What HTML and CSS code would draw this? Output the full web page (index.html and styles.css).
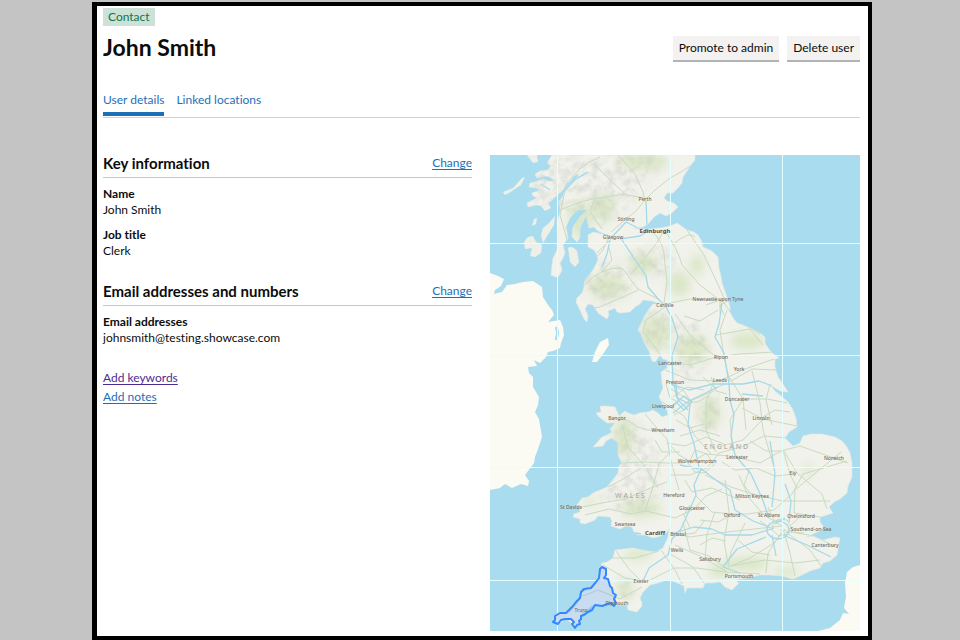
FILE: index.html
```html
<!DOCTYPE html>
<html lang="en">
<head>
<meta charset="utf-8">
<title>John Smith</title>
<link rel="stylesheet" href="styles.css">
</head>
<body>
<main class="page">
  <span class="tag">Contact</span>
  <header class="header">
    <h1 class="title">John Smith</h1>
    <div class="actions">
      <button type="button" class="button">Promote to admin</button>
      <button type="button" class="button">Delete user</button>
    </div>
  </header>
  <nav class="tabs">
    <a class="tab tab-current" href="#details" aria-current="page">User details</a>
    <a class="tab" href="#locations">Linked locations</a>
  </nav>
  <div class="columns">
    <div class="details" id="details">
      <section class="section">
        <div class="section-head"><h2 class="section-title">Key information</h2><a class="link" href="#key">Change</a></div>
        <dl class="list">
          <div class="item"><dt>Name</dt><dd>John Smith</dd></div>
          <div class="item"><dt>Job title</dt><dd>Clerk</dd></div>
        </dl>
      </section>
      <section class="section">
        <div class="section-head"><h2 class="section-title">Email addresses and numbers</h2><a class="link" href="#email">Change</a></div>
        <dl class="list">
          <div class="item"><dt>Email addresses</dt><dd>johnsmith@testing.showcase.com</dd></div>
        </dl>
      </section>
      <div class="extra">
        <a class="link link-visited" href="#keywords">Add keywords</a>
        <a class="link" href="#notes">Add notes</a>
      </div>
    </div>
    <svg class="map" viewBox="490 155 370 476" role="img" aria-label="Map">
      <defs>
        <path id="gb" d="M552 155L547 163 551 166 548 170 540 171 535 174 537 178 545 176 550 177 555 181 548 181 543 179 535 182 530 183 529 187 536 188 541 190 532 193 533 196 537 198 527 203 528 207 536 205 543 206 550 202 555 197 562 191 567 186 570 182 574 176 579 173 576 180 570 186 565 192 562 198 558 202 560 207 560 212 557 223 558 230 558 237 557 250 553 258 552 265 551 275 555 277 559 276 562 270 560 263 563 258 565 253 563 245 568 238 566 227 570 218 575 212 580 209 587 210 580 217 573 227 572 237 577 242 580 237 580 228 586 215 587 219 589 228 594 227 598 231 605 234 593 232 588 235 588 247 594 250 597 255 598 260 593 270 585 280 584 287 582 293 577 298 576 302 580 310 584 319 587 322 588 316 585 309 588 304 593 305 598 313 607 319 609 315 608 311 615 308 617 312 620 313 630 312 635 307 640 304 643 300 652 301 660 304 653 304 649 309 645 315 638 330 641 334 643 340 645 344 649 351 652 361 655 362 660 355 663 359 667 360 667 368 661 372 662 383 663 388 659 397 662 403 667 410 668 415 662 417 658 413 653 410 648 412 640 413 634 415 628 413 625 411 619 416 615 407 607 406 600 406 601 412 596 413 599 417 607 423 615 423 610 429 612 432 607 435 602 437 593 447 603 446 606 441 612 438 618 443 618 455 622 463 619 466 618 473 612 481 607 487 600 490 593 493 588 497 582 498 577 505 580 509 580 512 574 514 573 517 580 519 580 523 585 524 595 520 598 516 610 517 612 521 611 526 620 529 626 526 632 527 634 532 638 535 645 535 653 538 661 536 667 532 672 525 669 530 668 537 663 548 656 552 647 551 633 548 624 549 615 550 613 558 607 562 602 563 600 575 592 587 583 592 578 603 570 612 558 613 554 618 554 622 560 623 567 618 575 628 580 622 582 613 593 605 600 606 607 603 615 605 627 605 628 610 637 612 642 606 642 603 640 598 643 592 650 585 658 583 667 580 675 582 684 586 685 593 687 588 694 588 703 588 705 583 713 583 720 582 725 587 732 590 739 583 735 580 747 578 760 575 770 575 782 576 793 579 802 575 810 571 820 568 823 563 830 561 837 555 840 538 835 537 823 540 813 536 806 537 815 533 822 530 823 526 820 522 820 517 827 515 833 513 829 507 834 502 840 499 847 493 848 486 852 477 852 463 850 453 847 447 842 441 835 437 822 434 811 434 803 436 800 443 796 445 793 446 785 438 789 432 797 427 796 418 792 408 788 402 780 395 775 391 770 385 780 391 788 392 783 384 778 377 775 367 775 359 779 358 772 353 768 348 765 343 765 337 760 333 748 327 737 323 733 318 730 312 730 307 727 297 722 283 721 276 719 268 718 257 712 251 703 247 701 240 698 235 694 232 687 230 677 223 670 226 660 228 650 229 640 229 633 228 643 227 648 224 654 217 660 213 666 216 672 213 678 207 674 203 667 201 664 198 667 193 673 193 678 188 682 183 683 177 687 171 691 165 695 160 695 155Z"/>
        <path id="isles" d="M568 248Q572 245 577 251L579 262 575 267 570 262ZM524 242L528 237 533 236 536 242 542 245 541 253 535 257 530 256 532 248 525 249ZM541 235L543 228 549 223 555 216 554 225 549 233 543 243ZM532 226L534 219 537 218 536 224ZM503 192L513 188 522 178 525 177 521 185 509 193 505 195ZM527 155L537 155 538 162 533 163ZM541 206L548 203 551 208 545 211Z"/>
        <path id="man" d="M608 338L609 345 603 354 597 362 592 362 595 352 600 342Z"/>
        <clipPath id="land"><use href="#gb"/></clipPath>
        <filter id="soft" x="-30%" y="-30%" width="160%" height="160%"><feGaussianBlur stdDeviation="4"/></filter>
        <filter id="relief" x="0" y="0" width="100%" height="100%">
          <feTurbulence type="fractalNoise" baseFrequency=".13" numOctaves="4" seed="8" result="n"/>
          <feColorMatrix in="n" type="matrix" values="0 0 0 0 .55  0 0 0 0 .56  0 0 0 0 .52  2 0 0 0 -.75" result="m"/>
          <feGaussianBlur in="SourceAlpha" stdDeviation="5" result="b"/>
          <feComposite in="m" in2="b" operator="in"/>
        </filter>
      </defs>
      <rect x="490" y="155" width="370" height="476" fill="#aadcef"/>
      <path fill="#fbfaf3" d="M490 273L498 276 504 279 501 286 495 290 494 294 502 292 507 285 515 284 523 282 533 281 542 287 543 297 548 305 552 310 554 315 548 322 560 320 563 327 564 335 561 343 560 348 553 351 548 352 546 357 540 363 534 360 537 366 528 367 529 373 533 377 533 387 539 397 538 405 535 412 539 419 542 437 538 449 535 457 534 463 525 475 529 481 528 486 521 484 512 488 505 484 500 488 490 490ZM860 565L853 567 847 572 845 583 846 597 844 608 849 614 843 613 840 620 830 628 818 631 860 631Z"/>
      <path d="M556 327Q559 332 556 340" fill="none" stroke="#aadcef" stroke-width="3"/>
      <use href="#gb" fill="#f1f2eb" stroke="#e5e9df" stroke-width=".6"/>
      <use href="#isles" fill="#eef0e8"/>
      <use href="#man" fill="#fbfaf3"/>
      <g clip-path="url(#land)">
        <g fill="#d4e3bc" filter="url(#soft)" opacity=".75">
          <ellipse cx="643" cy="162" rx="25" ry="8"/><ellipse cx="603" cy="207" rx="12" ry="14"/><ellipse cx="580" cy="219" rx="11" ry="18"/><ellipse cx="607" cy="286" rx="19" ry="12"/><ellipse cx="643" cy="264" rx="15" ry="10"/><ellipse cx="697" cy="265" rx="7" ry="10"/><ellipse cx="679" cy="284" rx="11" ry="12"/><ellipse cx="656" cy="332" rx="15" ry="17"/><ellipse cx="692" cy="349" rx="16" ry="15"/><ellipse cx="747" cy="341" rx="17" ry="8"/><ellipse cx="710" cy="413" rx="10" ry="16"/><ellipse cx="624" cy="437" rx="10" ry="19"/><ellipse cx="641" cy="508" rx="20" ry="9"/><ellipse cx="638" cy="555" rx="14" ry="5"/><ellipse cx="625" cy="589" rx="8" ry="10"/><ellipse cx="719" cy="571" rx="10" ry="7"/><ellipse cx="746" cy="564" rx="22" ry="7"/><ellipse cx="786" cy="572" rx="14" ry="4"/><ellipse cx="808" cy="470" rx="5" ry="5"/><ellipse cx="590" cy="502" rx="8" ry="3"/>
        </g>
        <g filter="url(#relief)" opacity=".5">
          <path d="M530 155H665L630 205 600 225 580 212 530 208Z"/><ellipse cx="607" cy="282" rx="25" ry="22"/><ellipse cx="653" cy="262" rx="25" ry="15"/><ellipse cx="657" cy="330" rx="17" ry="20"/><ellipse cx="690" cy="350" rx="18" ry="30"/><ellipse cx="709" cy="413" rx="11" ry="20"/><path d="M610 420L640 423 662 460 657 505 625 515 600 500 620 470Z"/><ellipse cx="625" cy="590" rx="8" ry="10"/>
        </g>
        <g fill="none" stroke="#c8dac2" stroke-width="1">
          <path d="M600 157Q575 166 565 190L560 215 568 243M595 165Q610 180 626 195L645 198M618 155L635 174 643 192 645 201M695 163Q678 174 670 178L655 190 645 200M645 200L636 211 626 219 611 232M560 210Q585 199 600 198L625 194M595 196L590 212 602 229M610 235L603 250 593 261M611 239L597 253M665 229L656 244 645 258 630 275M650 230Q665 240 665 265L667 282 664 303M665 231Q678 249 682 265L700 285 722 302M687 230L704 255 714 276 725 300M672 245Q690 230 695 237M585 285Q600 267 622 268L638 289 660 300M638 290L625 296 600 307 588 309M602 272L612 260 609 248M665 304L690 299 724 300M665 307L646 320 643 331 660 354M675 314L690 335 716 357M684 316L700 321 718 310M727 310L720 330 724 357 730 382M716 335L750 329 763 345M662 361L690 365 716 357 740 354 774 352M665 370L690 380 720 381 745 369 774 359M731 381L752 369 776 370M722 300L736 320 760 334M730 378L743 399 746 430M752 371L760 403 763 430 773 464M741 399L767 399 787 403M742 408L763 419 797 426M713 384L706 402 706 430 716 452M671 389L690 401 714 391M661 401L684 416 695 436 711 454M645 414L656 427 667 439 671 461 679 490M620 416L638 427 647 430 667 431M622 424L628 447 644 465 658 488M621 463L644 462 666 463 683 463M608 487L627 477 647 464M582 507L607 502 626 499 648 489 667 482M585 515L609 509 631 514 646 511 675 518M645 511L652 490 659 464 672 450M675 518L694 509 706 496 722 489M671 475L690 475 707 468 719 453 744 446 764 436 786 438M690 463L705 454 730 456 760 463 781 451 800 446 848 463M667 443L685 446 706 437 724 444M695 495L712 512 731 514 748 514 774 510 792 494 803 474 847 461M705 475L731 487 753 494 782 501 830 501M750 441L766 451 784 451 797 473 822 494 827 509M841 452L813 475 795 490 794 513 820 517M783 450L790 474 797 488M739 475L749 498 764 515 782 526M725 480L729 512 724 541 728 564M683 522L690 550 709 556 724 567M672 533L690 537 719 533 754 529 782 526M673 536L695 533 705 520M675 545L700 556 726 571M670 554L693 567 704 583M661 550L675 570 682 584M650 580L674 568 697 568 725 572 760 574M728 567L750 558 774 543 785 529M784 532L790 553 795 576M781 533L768 553 766 573M786 532L810 550 821 566M780 530L814 536 838 548M820 560L795 563 765 560 731 566M745 523L731 552 728 566M715 512L707 534 705 559M743 399L730 420 733 451M763 419L743 440 718 447M610 558L635 558 659 551M603 565L625 578 642 581M616 551L629 569 640 580M642 587L620 599 598 590 583 596M670 445L679 455 693 463"/>
          <path d="M666 384L670 398 678 402 670 409M672 385L684 391 690 400 684 410 674 415M673 397L687 387 704 390M689 402L698 402 708 396M703 377L715 388 725 384M711 377L716 391 727 394M690 461L695 450 707 454 714 465 704 473 695 472 688 463M773 524L778 519 787 520 791 527 787 534 779 536 772 530ZM770 528L760 521M775 522L768 507M790 526L803 514M790 532L804 533M706 305L720 300 720 313M730 300L720 305 724 315M676 420L690 428 704 424M680 436L700 430 720 436M722 462L735 470 756 468 775 476 795 474M758 420L775 410 790 412M770 384L766 400 772 425M685 480L692 492 712 488 740 500M750 468L744 485 753 497M700 520L718 522 730 516M738 540L752 552 770 555M700 545L712 538 726 541M690 505L684 515 690 528M655 440L662 452 680 452"/>
        </g>
        <g fill="none" stroke="#a5d9e9" stroke-width="1.3" stroke-linejoin="round">
          <path d="M646 201L647 226M611 238L626 222 640 229M620 239L640 236 649 230M610 240L607 254 602 267M622 240L634 258 646 276 648 287 659 300 666 307 672 318 678 337 672 356 673 380 677 398 690 404 688 425 694 444 699 467 713 478 730 490 735 510 753 521 769 527M722 303L719 324 715 337 724 353 729 384 730 400 734 415 731 436 735 455 751 474 762 498 769 518M671 384L689 390 713 384 743 384 759 381 772 386M673 413L687 402 718 387M742 394L763 396M680 465L699 469M702 467L694 485 696 495 681 529 672 539 668 555 649 568 643 581M672 534L694 527 712 529 725 535 752 535 774 528M770 441L775 474 772 507M785 484L791 501 789 522M772 535L776 556M766 537L737 549 723 567 740 573M775 524L785 518M783 535L807 545 831 557M610 236L590 230M641 534L625 531M676 384L678 400 688 410M673 405L684 396 692 402 684 410 676 402"/>
          <ellipse cx="778" cy="530" rx="11" ry="9"/>
        </g>
        <path d="M588 172L567 184 558 200M550 190L541 184M575 215L568 236" stroke="#aadcef" stroke-width="1.5" fill="none"/>
      </g>
      <path class="grid-lines" d="M557.500 155V631M670.500 155V631M782.500 155V631M490 243.500H860M490 355.500H860M490 467.500H860M490 580.500H860"/>
      <path class="district" d="M600 569L602 567 606 569 606 575 604 578 608 579 610 586 612 588 613 593 616 595 614 599 616 603 614 606 611 603 602 606 595 605 592 610 588 612 584 615 581 616 581 619 579 621 580 624 577 625 575 628 572 624 574 622 571 619 565 619 561 620 558 624 553 622 555 620 555 616 560 613 566 613 573 606 576 602 580 598 581 592 584 589 591 588 596 582 599 578Z"/>
      <g class="labels">
        <text x="645" y="201">Perth</text><text x="626" y="221">Stirling</text><text x="655" y="233" class="city">Edinburgh</text><text x="613" y="239">Glasgow</text><text x="665" y="307">Carlisle</text><text x="718" y="301">Newcastle upon Tyne</text><text x="721" y="359">Ripon</text><text x="739" y="371">York</text><text x="670" y="365">Lancaster</text><text x="675" y="384">Preston</text><text x="720" y="382">Leeds</text><text x="737" y="401">Doncaster</text><text x="663" y="408">Liverpool</text><text x="617" y="420">Bangor</text><text x="663" y="432">Wrexham</text><text x="761" y="420">Lincoln</text><text x="737" y="459">Leicester</text><text x="697" y="463">Wolverhampton</text><text x="834" y="460">Norwich</text><text x="793" y="475">Ely</text><text x="674" y="497">Hereford</text><text x="752" y="498">Milton Keynes</text><text x="571" y="509">St Davids</text><text x="692" y="510">Gloucester</text><text x="732" y="517">Oxford</text><text x="769" y="517">St Albans</text><text x="801" y="518">Chelmsford</text><text x="625" y="526">Swansea</text><text x="655" y="535" class="city">Cardiff</text><text x="678" y="536">Bristol</text><text x="811" y="531">Southend-on-Sea</text><text x="825" y="547">Canterbury</text><text x="677" y="552">Wells</text><text x="710" y="561">Salisbury</text><text x="739" y="578">Portsmouth</text><text x="641" y="583">Exeter</text><text x="617" y="605">Plymouth</text><text x="581" y="612">Truro</text>
        <text x="726" y="449" class="country">E N G L A N D</text><text x="630" y="498" class="country">W A L E S</text>
      </g>
    </svg>
  </div>
</main>
</body>
</html>
```
FILE: styles.css
```css
* { box-sizing: border-box; }
body {
  margin: 0;
  padding: 2px 88px 0 92px;
  background: #c4c4c4;
  color: #0b0c0c;
  font: 12px/16px Lato, "Noto Sans", sans-serif;
  font-variant-ligatures: none;
}
.page {
  padding: 2px 8px 5px 6px;
  border: 4px solid #000;
  border-left-width: 5px;
  background: #fff;
}
.tag {
  display: inline-block;
  padding: 1px 5px;
  background: #cce2d8;
  color: #10734b;
}
.header {
  display: flex;
  justify-content: space-between;
  align-items: center;
  height: 46px;
}
.title { margin: 0; padding-bottom: 4px; font-size: 23px; line-height: 28px; font-weight: 700; }
.actions { display: flex; gap: 8px; }
.button {
  padding: 4px 6px;
  border: 0;
  border-bottom: 2px solid #b1b4b6;
  background: #f3f2f1;
  color: #0b0c0c;
  font: inherit;
}
.tabs {
  display: flex;
  gap: 12px;
  margin-top: 20px;
  border-bottom: 1px solid #d0d3d5;
}
.tab {
  padding-bottom: 9px;
  color: #1d70b8;
  text-decoration: none;
}
.tab-current { padding-bottom: 4px; border-bottom: 4px solid #1d70b8; margin-bottom: 1px; }
.columns {
  display: grid;
  grid-template-columns: 369fr 370fr;
  gap: 18px;
  align-items: start;
  margin-top: 37px;
}
.section { margin-bottom: 24px; }
.section-head {
  display: flex;
  justify-content: space-between;
  padding-bottom: 5px;
  border-bottom: 1px solid #c6c9cb;
}
.section-title { margin: 0; font-size: 15px; line-height: 17px; font-weight: 700; }
.link { color: #1d70b8; text-underline-offset: 2px; }
.link-visited { color: #4c2c92; }
.list { margin: 8px 0 0; }
.item { margin-bottom: 9px; }
.item dt { font-weight: 700; }
.item dd { margin: 0; }
.extra { display: flex; flex-direction: column; align-items: flex-start; gap: 3px; }
.map { display: block; width: 100%; }
.grid-lines { fill: none; stroke: #e5ffff; stroke-width: 1; }
.district { fill: #3388ff; fill-opacity: .2; stroke: #3388ff; stroke-width: 2; stroke-linejoin: round; }
.labels {
  fill: #776b60;
  font: 500 5px "Noto Sans", sans-serif;
  text-anchor: middle;
}
.city { fill: #5c4e43; font-size: 6px; font-weight: 700; }
.country { fill: #b3aca5; font-size: 7px; }
```
